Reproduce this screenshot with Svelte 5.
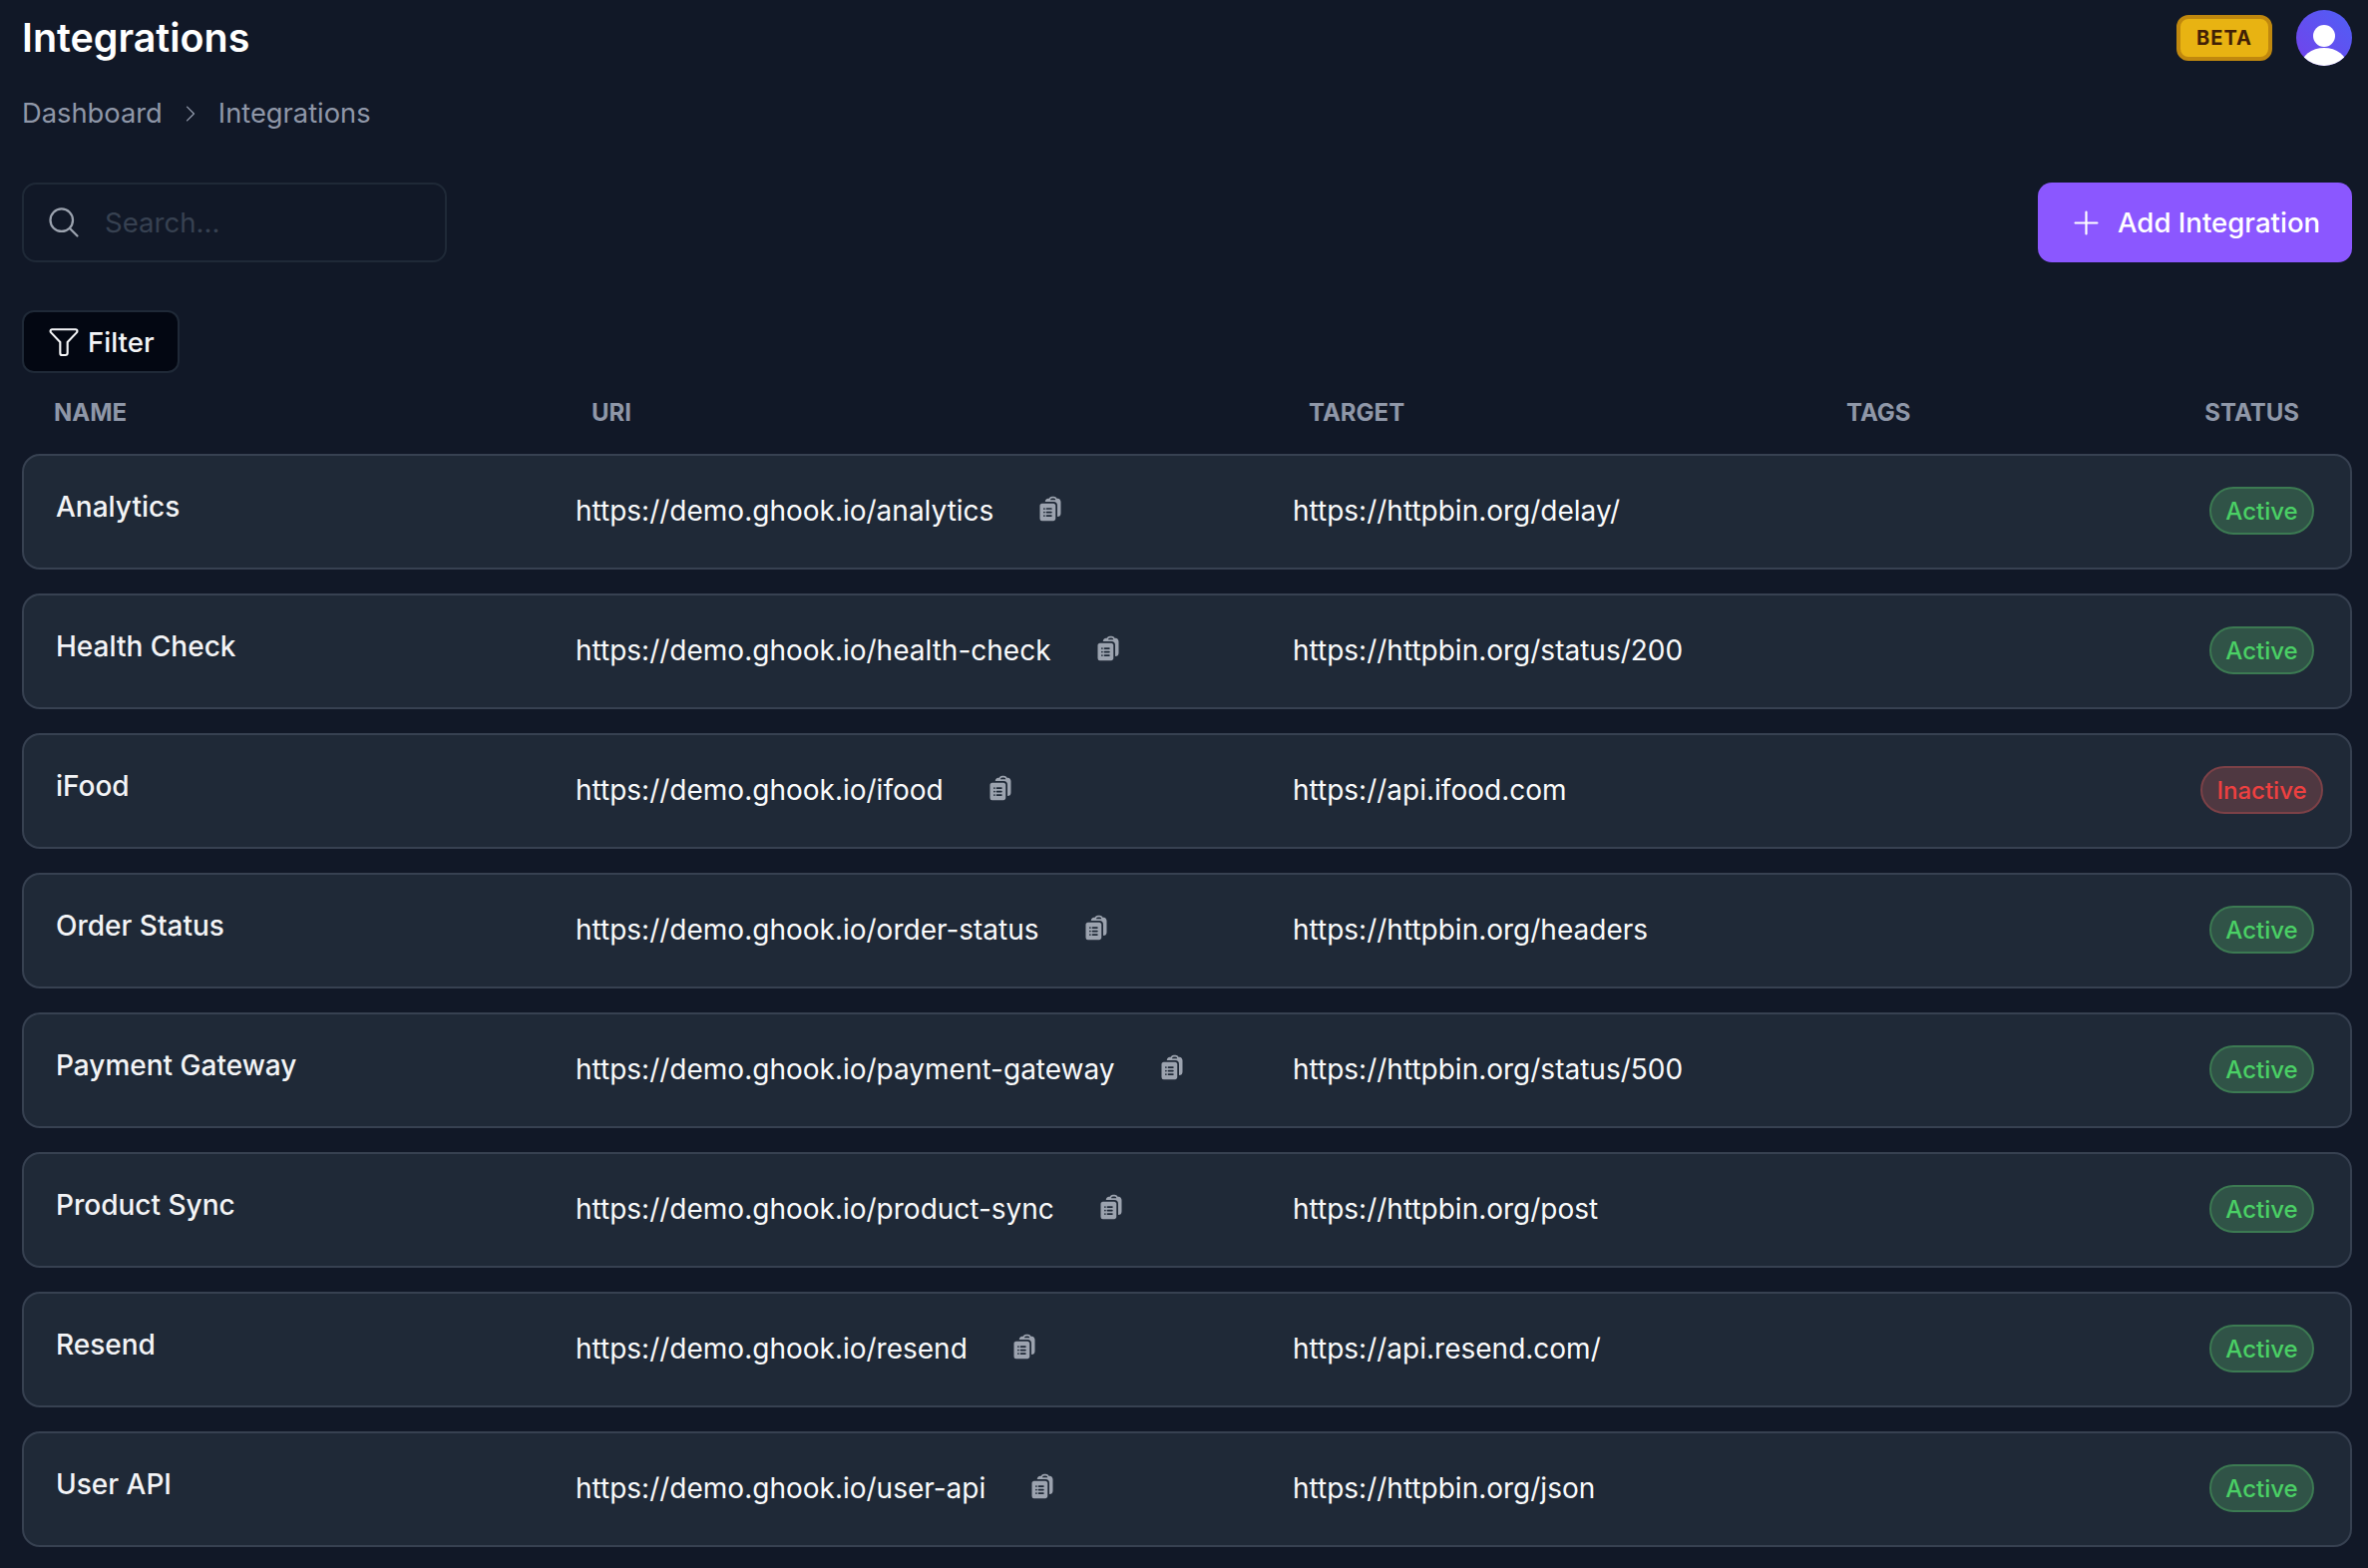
<script>
	const integrations = [
		{ name: 'Analytics', slug: 'analytics', target: 'https://httpbin.org/delay/', active: true },
		{ name: 'Health Check', slug: 'health-check', target: 'https://httpbin.org/status/200', active: true },
		{ name: 'iFood', slug: 'ifood', target: 'https://api.ifood.com', active: false },
		{ name: 'Order Status', slug: 'order-status', target: 'https://httpbin.org/headers', active: true },
		{ name: 'Payment Gateway', slug: 'payment-gateway', target: 'https://httpbin.org/status/500', active: true },
		{ name: 'Product Sync', slug: 'product-sync', target: 'https://httpbin.org/post', active: true },
		{ name: 'Resend', slug: 'resend', target: 'https://api.resend.com/', active: true },
		{ name: 'User API', slug: 'user-api', target: 'https://httpbin.org/json', active: true }
	];
</script>

<div class="page">
	<header class="top">
		<div class="heading">
			<h1>Integrations</h1>
			<nav class="crumbs">
				<span>Dashboard</span>
				<svg viewBox="0 0 24 24" fill="none" stroke="currentColor" stroke-width="1.5">
					<path d="M8.25 4.5l7.5 7.5-7.5 7.5" stroke-linecap="round" stroke-linejoin="round" />
				</svg>
				<span>Integrations</span>
			</nav>
		</div>
		<div class="account">
			<span class="beta">BETA</span>
			<svg class="avatar" viewBox="0 0 56 56">
				<defs>
					<linearGradient id="avatar-bg" x1="0" y1="1" x2="1" y2="0">
						<stop offset="0" stop-color="#7342ea" />
						<stop offset="1" stop-color="#4f5ff6" />
					</linearGradient>
					<clipPath id="avatar-clip"><circle cx="28" cy="28" r="28" /></clipPath>
				</defs>
				<g clip-path="url(#avatar-clip)">
					<rect width="56" height="56" fill="url(#avatar-bg)" />
					<circle cx="28" cy="26" r="11" fill="#fff" />
					<ellipse cx="28" cy="56" rx="23" ry="18" fill="#fff" />
				</g>
			</svg>
		</div>
	</header>

	<div class="toolbar">
		<label class="search">
			<svg viewBox="0 0 24 24" fill="none" stroke="currentColor" stroke-width="1.5">
				<path d="M21 21l-5.197-5.197m0 0A7.5 7.5 0 105.196 5.196a7.5 7.5 0 0010.607 10.607z" stroke-linecap="round" stroke-linejoin="round" />
			</svg>
			<input placeholder="Search..." />
		</label>
		<button class="add">
			<svg viewBox="0 0 24 24" fill="none" stroke="currentColor" stroke-width="1.5">
				<path d="M12 4.5v15m7.5-7.5h-15" stroke-linecap="round" stroke-linejoin="round" />
			</svg>
			Add Integration
		</button>
	</div>

	<button class="filter">
		<svg viewBox="0 0 24 24" fill="none" stroke="currentColor" stroke-width="1.5">
			<path d="M2.5 4.2c0-.7.5-1.200 1.200-1.200h16.600c.7 0 1.200.5 1.200 1.200 0 .4-.1.7-.4 1L14.600 12v7.600c0 .9-.7 1.600-1.600 1.600h-2.200c-.8 0-1.400-.7-1.400-1.500V12L2.900 5.200c-.3-.3-.4-.6-.4-1z" stroke-linejoin="round" />
		</svg>
		Filter
	</button>

	<div class="columns">
		<span>NAME</span>
		<span>URI</span>
		<span>TARGET</span>
		<span>TAGS</span>
		<span class="status-head">STATUS</span>
	</div>

	<div class="rows">
		{#each integrations as item}
			<div class="row">
				<div class="name">{item.name}</div>
				<div class="uri">
					<span>https://demo.ghook.io/{item.slug}</span>
					<svg viewBox="0 0 24 24" fill="currentColor">
						<path fill-rule="evenodd" clip-rule="evenodd" d="M7.502 6h7.128A3.375 3.375 0 0118 9.375v9.375a3 3 0 003-3V6.108c0-1.505-1.125-2.811-2.664-2.94a48.972 48.972 0 00-.673-.05A3 3 0 0015 1.500h-1.500a3 3 0 00-2.663 1.618c-.225.015-.45.032-.673.05C8.662 3.295 7.554 4.542 7.502 6zM13.500 3A1.500 1.500 0 0012 4.500h4.500A1.500 1.500 0 0015 3h-1.500z" />
						<path fill-rule="evenodd" clip-rule="evenodd" d="M3 9.375C3 8.339 3.840 7.500 4.875 7.500h9.750c1.036 0 1.875.84 1.875 1.875v11.250c0 1.035-.84 1.875-1.875 1.875h-9.750A1.875 1.875 0 013 20.625V9.375zM6 12a.75.75 0 01.75-.75h.008a.75.75 0 01.75.75v.008a.75.75 0 01-.75.75H6.750a.75.75 0 01-.75-.75V12zm2.250 0a.75.75 0 01.75-.75h3.750a.75.75 0 010 1.500H9a.75.75 0 01-.75-.75zM6 15a.75.75 0 01.75-.75h.008a.75.75 0 01.75.75v.008a.75.75 0 01-.75.75H6.750a.75.75 0 01-.75-.75V15zm2.250 0a.75.75 0 01.75-.75h3.750a.75.75 0 010 1.500H9a.75.75 0 01-.75-.75zM6 18a.75.75 0 01.75-.75h.008a.75.75 0 01.75.75v.008a.75.75 0 01-.75.75H6.750a.75.75 0 01-.75-.75V18zm2.250 0a.75.75 0 01.75-.75h3.750a.75.75 0 010 1.500H9a.75.75 0 01-.75-.75z" />
					</svg>
				</div>
				<div class="target">{item.target}</div>
				<div class="status" class:off={!item.active}>{item.active ? 'Active' : 'Inactive'}</div>
			</div>
		{/each}
	</div>
</div>

<style>
	:global(body) {
		background: #111827;
	}

	.page {
		min-height: 1572px;
		box-sizing: border-box;
		padding: 10px 16px 0 22px;
		font-family: Inter, 'Liberation Sans', sans-serif;
		color: #fff;
	}

	.top {
		display: flex;
		justify-content: space-between;
		align-items: flex-start;
	}

	h1 {
		margin: 0;
		font-size: 39.4px;
		line-height: 56px;
		font-weight: 600;
	}

	.crumbs {
		display: flex;
		align-items: center;
		gap: 17px;
		margin-top: 31px;
		font-size: 27.3px;
		line-height: 34px;
		color: #8f97a8;
	}

	.crumbs svg {
		width: 22px;
		height: 22px;
	}

	.account {
		display: flex;
		align-items: center;
		gap: 24px;
	}

	.beta {
		box-sizing: border-box;
		width: 96px;
		height: 46px;
		display: flex;
		align-items: center;
		justify-content: center;
		background: #e8b312;
		border: 4px solid #c0880e;
		border-radius: 12px;
		color: #422006;
		font-size: 20px;
		font-weight: 700;
		letter-spacing: 1px;
	}

	.avatar {
		width: 56px;
		height: 56px;
	}

	.toolbar {
		display: flex;
		justify-content: space-between;
		margin-top: 52px;
	}

	.search {
		box-sizing: border-box;
		width: 426px;
		height: 80px;
		display: flex;
		align-items: center;
		gap: 23px;
		padding-left: 22px;
		border: 2px solid #1f2937;
		border-radius: 14px;
		color: #9ca3af;
	}

	.search svg {
		width: 36px;
		height: 36px;
		flex: none;
	}

	.search input {
		width: 300px;
		padding: 0;
		border: 0;
		outline: 0;
		background: transparent;
		font: inherit;
		font-size: 27.6px;
		color: #fff;
	}

	.search input::placeholder {
		color: #374151;
		opacity: 1;
	}

	.add {
		width: 315px;
		height: 80px;
		display: flex;
		align-items: center;
		gap: 14px;
		padding: 0 0 0 31px;
		border: 0;
		border-radius: 14px;
		background: #8b57ff;
		color: #fff;
		font: inherit;
		font-size: 27.6px;
		font-weight: 500;
	}

	.add svg {
		width: 35px;
		height: 35px;
		flex: none;
	}

	.filter {
		box-sizing: border-box;
		width: 158px;
		height: 63px;
		display: flex;
		align-items: center;
		gap: 7px;
		margin-top: 48px;
		padding: 0 0 0 23px;
		background: #030712;
		border: 2px solid #1f2937;
		border-radius: 12px;
		color: #f3f4f6;
		font: inherit;
		font-size: 27.6px;
		font-weight: 500;
	}

	.filter svg {
		width: 34px;
		height: 34px;
		flex: none;
	}

	.columns {
		display: grid;
		grid-template-columns: 539px 719px 539px 1fr auto;
		margin-top: 24px;
		padding: 0 53px 0 32px;
		font-size: 24px;
		line-height: 32px;
		font-weight: 700;
		color: #8f97a8;
	}

	.rows {
		display: flex;
		flex-direction: column;
		gap: 24px;
		margin-top: 25px;
	}

	.row {
		box-sizing: border-box;
		height: 116px;
		display: grid;
		grid-template-columns: 521px 719px 1fr 121px;
		align-items: center;
		padding: 0 28px 2px 32px;
		background: #1f2937;
		border: 2px solid #374151;
		border-radius: 18px;
	}

	.name {
		align-self: start;
		margin-top: 34px;
		font-size: 28px;
		line-height: 34px;
		font-weight: 500;
		color: #f3f4f6;
	}

	.uri {
		display: flex;
		align-items: center;
		gap: 43px;
		font-size: 28px;
		line-height: 36px;
		color: #f9fafb;
	}

	.uri svg {
		width: 28px;
		height: 28px;
		margin-top: -4px;
		color: #9ca3af;
	}

	.target {
		font-size: 28px;
		line-height: 36px;
		color: #f9fafb;
	}

	.status {
		box-sizing: border-box;
		height: 48px;
		justify-self: center;
		display: flex;
		align-items: center;
		padding: 0 14px;
		border: 2px solid #3c7a52;
		border-radius: 24px;
		background: #305347;
		color: #4ad065;
		font-size: 24px;
		font-weight: 500;
	}

	.status.off {
		border-color: #7c4147;
		background: #4f3841;
		color: #ee4040;
	}
</style>
